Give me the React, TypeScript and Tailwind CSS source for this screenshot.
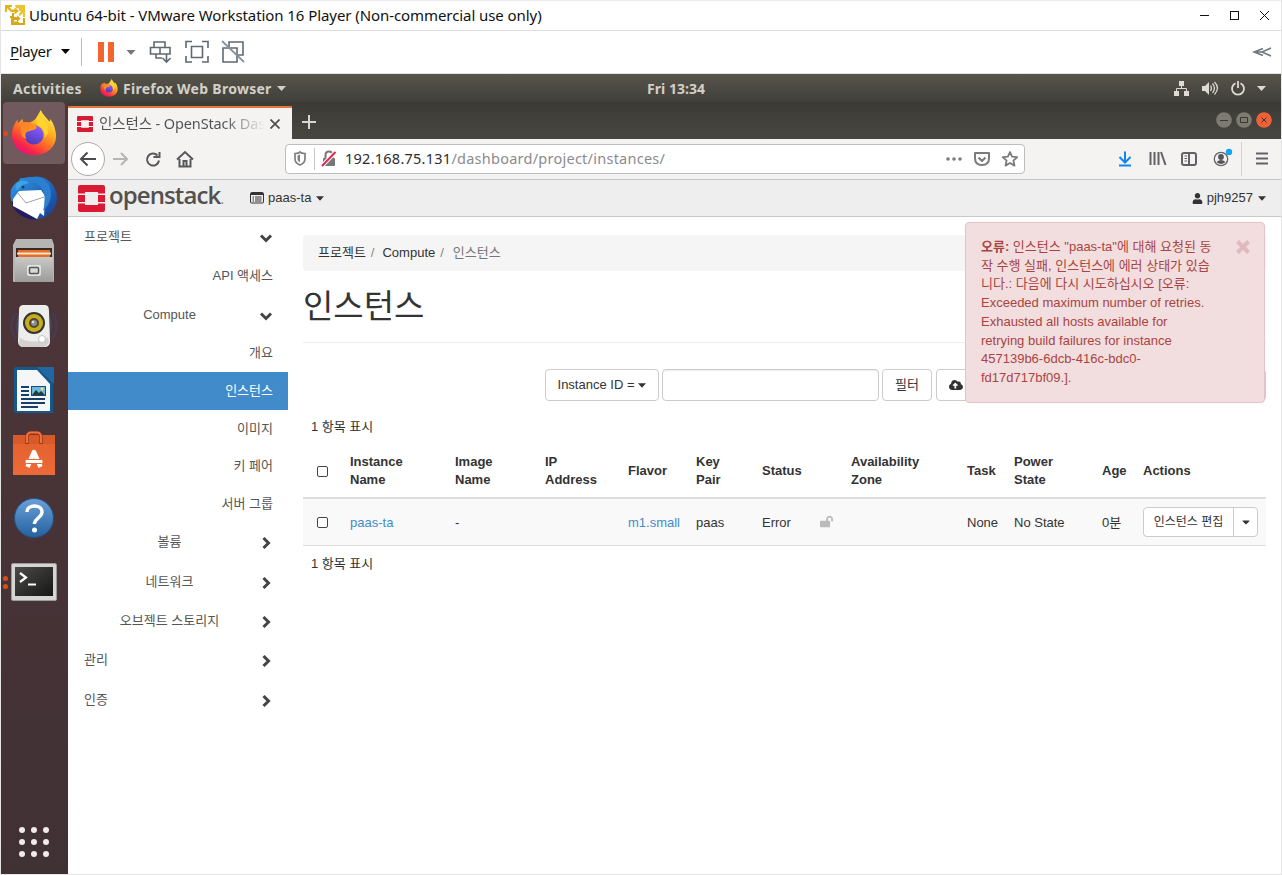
import React from "react";
import { FaCaretDown, FaCloudUploadAlt, FaLockOpen, FaTimes, FaUser } from "react-icons/fa";

const sans = "font-['Liberation_Sans','Noto_Sans_CJK_KR',sans-serif]";
const ubuntu = "font-['Noto_Sans','Noto_Sans_CJK_KR',sans-serif]";

function VmwareLogo() {
  return (
    <svg width="21" height="21" viewBox="0 0 21 21" className="shrink-0">
      <path d="M0 0h7v2H4.500l2 2.500h3V2.500L14 6l-4.500 3.500V7H6L2 3v4H0z" fill="#e2b21c" />
      <path d="M10 0h10v12h-2V8l-3 3-1.500-1.500L16 6h-2V3.500h-3z" fill="#ecc433" />
      <path d="M7 8h2v4h3v-2l3.500 3.500L12 17v-2H9v1.500h4L14.500 18H18v-5h2v7H6V13H5v-2h2z" fill="#d9a710" />
    </svg>
  );
}

function Firefox({ size, id }: { size: number; id: string }) {
  return (
    <svg width={size} height={size} viewBox="0 0 48 48" className="shrink-0">
      <defs>
        <linearGradient id={id + "a"} x1="0.85" y1="0.05" x2="0.25" y2="1">
          <stop offset="0" stopColor="#fff44f" />
          <stop offset="0.35" stopColor="#ffb01f" />
          <stop offset="0.62" stopColor="#ff6329" />
          <stop offset="0.85" stopColor="#f8204e" />
          <stop offset="1" stopColor="#e31587" />
        </linearGradient>
        <linearGradient id={id + "b"} x1="0.7" y1="0" x2="0.3" y2="1">
          <stop offset="0" stopColor="#9059ff" />
          <stop offset="1" stopColor="#4a3cb8" />
        </linearGradient>
        <linearGradient id={id + "c"} x1="0" y1="0" x2="1" y2="1">
          <stop offset="0" stopColor="#ff7a2a" />
          <stop offset="1" stopColor="#ffa51e" />
        </linearGradient>
      </defs>
      <path d="M31 0c2 5 6 8 9 12 1-1 1-2 1-3 4 6 6 12 6 18 0 12-10 20-23 20S1 38 1 26c0-7 3-12 6-16v4l5-5c0 2 1 4 2 5 3 0 8-1 11-4 2-3 4-6 6-10z" fill={"url(#" + id + "a)"} />
      <circle cx="24" cy="26" r="10" fill={"url(#" + id + "b)"} />
      <path d="M12 13c5-1 11 0 15 5 0 2-4 3-8 4-4 1-5 4-3 8-4-1-6-4-6-8s1-7 2-9z" fill={"url(#" + id + "c)"} />
      <path d="M28 16c5 2 8 7 7 13 5-4 5-11 2-15-3-4-6-6-5-12-5 4-7 9-4 14z" fill="#ffd52c" />
    </svg>
  );
}

function Thunderbird() {
  return (
    <svg width="48" height="48" viewBox="0 0 48 48">
      <defs>
        <linearGradient id="tb" x1="0" y1="0" x2="1" y2="1">
          <stop offset="0" stopColor="#2f9be8" />
          <stop offset="0.6" stopColor="#1f5fb4" />
          <stop offset="1" stopColor="#1b3a88" />
        </linearGradient>
      </defs>
      <path d="M10 5l8 1c8-5 19-2 25 6 6 9 5 20-1 27-7 8-21 10-30 4C3 37-1 27 1 17c1-3 3-6 6-8 2-1 3-2 3-4z" fill="url(#tb)" />
      <path d="M1 28c2 9 9 16 18 18l8 1-8-8z" fill="#241a5e" />
      <path d="M3 26L9 18l22-1 4 6-1 20-4-3-3 6L3 33z" fill="#fff" />
      <path d="M7 19l9 11 18-6" stroke="#9aa4b2" strokeWidth="1" fill="none" />
      <path d="M10 6c6 1 14 1 20 7 5 5 6 14 3 25 8-7 10-18 6-26C34 4 22 2 10 6z" fill="#2e7fd0" />
      <path d="M7 10c4-3 9-3 12 0-5 1-8 3-12 8-2-3-2-6 0-8z" fill="#3fa2e6" />
      <circle cx="13" cy="14" r="1.5" fill="#173a73" />
    </svg>
  );
}

function Files() {
  return (
    <svg width="44" height="46" viewBox="0 0 44 46">
      <defs>
        <linearGradient id="fl" x1="0" y1="0" x2="0" y2="1">
          <stop offset="0" stopColor="#c9c9c7" />
          <stop offset="1" stopColor="#9b9b99" />
        </linearGradient>
      </defs>
      <path d="M4 1h36l2 6v36a1 1 0 01-1 1H2a1 1 0 01-1-1V7z" fill="#b5b5b3" />
      <path d="M4 10h36v9H4z" fill="#3a2a22" />
      <path d="M6 12h32v7H6z" fill="#e2702c" />
      <path d="M5 14.500h34v2H5z" fill="#fbe3c4" />
      <path d="M3 19h38v25H3z" fill="url(#fl)" />
      <rect x="15" y="27" width="14" height="11" rx="2" fill="#e2e2e0" />
      <rect x="17.500" y="29.500" width="9" height="6" rx="1" fill="#d8d8d8" stroke="#555" strokeWidth="1.500" />
    </svg>
  );
}

function Rhythmbox() {
  return (
    <svg width="48" height="46" viewBox="0 0 48 46">
      <path d="M6 10c-6 8-6 18 0 26M42 10c6 8 6 18 0 26" stroke="#4a3a4e" strokeWidth="3" fill="none" />
      <path d="M10 12c-4 7-4 15 0 22M38 12c4 7 4 15 0 22" stroke="#444058" strokeWidth="3" fill="none" />
      <path d="M14 2h20c4 0 5 2 5 6l1 30c0 4-2 6-6 6H14c-4 0-6-2-6-6L9 8c0-4 1-6 5-6z" fill="#ededeb" />
      <path d="M10 34c4 6 24 6 28 0l1 5c-2 4-4 5-6 5H14c-3 0-5-2-5-5z" fill="#d2d2d2" />
      <circle cx="24" cy="20" r="11" fill="#33332f" />
      <circle cx="24" cy="20" r="9" fill="#c9ac1b" />
      <circle cx="24" cy="20" r="5" fill="#4c4a38" />
      <circle cx="24" cy="20" r="3" fill="#8d8f8a" />
      <circle cx="23" cy="19" r="1.200" fill="#e4e4e4" />
      <circle cx="32" cy="36" r="3.500" fill="#fff" stroke="#c4c4c4" />
    </svg>
  );
}

function Writer() {
  return (
    <svg width="42" height="48" viewBox="0 0 42 48">
      <path d="M3 1h24l13 13v33H3a2 2 0 01-2-2V3a2 2 0 012-2z" fill="#14588c" />
      <path d="M4 4h20l13 14v27H4z" fill="#f4f6f8" />
      <path d="M24 1h17v17z" fill="#2167a4" />
      <path d="M8 20h8v2H8zM8 24h8v2H8zM8 28h8v2H8zM8 32h24v2H8zM8 36h24v2H8zM8 40h17v2H8z" fill="#173f68" />
      <path d="M18 20h15v10H18z" fill="#174d7e" />
      <path d="M19 21h13v8H19z" fill="#6eb9df" />
      <path d="M19 29l4-5 3 3 2-2 4 4z" fill="#273c34" />
      <circle cx="29" cy="23" r="1.400" fill="#f8e86c" />
    </svg>
  );
}

function Software() {
  return (
    <svg width="44" height="46" viewBox="0 0 44 46">
      <defs>
        <linearGradient id="sw" x1="0" y1="0" x2="0" y2="1">
          <stop offset="0" stopColor="#e0602c" />
          <stop offset="1" stopColor="#ee6a38" />
        </linearGradient>
      </defs>
      <path d="M1 4h42v40H1z" fill="url(#sw)" />
      <path d="M1 4h42v9H1z" fill="#d85a2a" />
      <path d="M15 13V7q0-5 4-5h6q4 0 4 5v6" stroke="#9d3716" strokeWidth="3.500" fill="none" />
      <path d="M15 12V6q0-4.500 4-4.500h6q4 0 4 4.500v6" stroke="#ee7142" strokeWidth="2" fill="none" />
      <path d="M15.500 36l6.500-15 6.500 15" stroke="#fff" strokeWidth="4.500" fill="none" strokeLinejoin="round" />
      <rect x="13" y="28.500" width="18" height="4" rx="1.500" fill="#fff" stroke="#e9683a" />
    </svg>
  );
}

function Help() {
  return (
    <svg width="42" height="42" viewBox="0 0 42 42">
      <defs>
        <linearGradient id="hp" x1="0" y1="0" x2="0" y2="1">
          <stop offset="0" stopColor="#6aa0d8" />
          <stop offset="1" stopColor="#24619f" />
        </linearGradient>
      </defs>
      <circle cx="21" cy="21" r="19.500" fill="url(#hp)" stroke="#245182" strokeWidth="1" />
      <path d="M14 15c0-8 15-8 15 0 0 5-6 6-7.500 11v1" stroke="#fff" strokeWidth="3.400" fill="none" />
      <circle cx="21.500" cy="33" r="2.500" fill="#fff" />
    </svg>
  );
}

function Terminal() {
  return (
    <svg width="46" height="38" viewBox="0 0 46 38">
      <defs>
        <linearGradient id="tm" x1="0" y1="0" x2="1" y2="1">
          <stop offset="0" stopColor="#4b4b49" />
          <stop offset="1" stopColor="#161616" />
        </linearGradient>
      </defs>
      <rect x="0.500" y="0.500" width="45" height="37" rx="1.500" fill="#d5d5d3" stroke="#9c9c9a" />
      <rect x="4" y="4" width="38" height="29" fill="url(#tm)" />
      <path d="M9 10l6 4.500-6 4.500" stroke="#fff" strokeWidth="2.200" fill="none" />
      <path d="M17 21.500h8" stroke="#fff" strokeWidth="2" />
    </svg>
  );
}

function OpenStackMark({ size }: { size: number }) {
  return (
    <svg width={size} height={size} viewBox="0 0 27 27" className="shrink-0">
      <path d="M2 0h23a2 2 0 012 2v6.500h-7V7H7v1.500H0V2a2 2 0 012-2zM0 10h7v7H0zM20 10h7v7h-7zM0 18.500h7V20h13v-1.500h7V25a2 2 0 01-2 2H2a2 2 0 01-2-2z" fill="#da1a32" />
    </svg>
  );
}

function Caret({ className }: { className: string }) {
  return (
    <svg width="9" height="5" viewBox="0 0 9 5" className={"shrink-0 " + className}>
      <path d="M0 0h9L4.500 5z" fill="currentColor" />
    </svg>
  );
}

function Chevron({ open }: { open?: boolean }) {
  return (
    <svg width="14" height="14" viewBox="0 0 14 14" fill="none" stroke="#444" strokeWidth="3">
      <path d={open ? "M2 4.500l5 5 5-5" : "M4.500 2l5 5-5 5"} />
    </svg>
  );
}

function TitleBar() {
  return (
    <div className="flex h-[31px] items-center border-b border-t border-b-[#dedede] border-t-[#ececec] bg-white pl-[4px]">
      <VmwareLogo />
      <span className="ml-[3px] whitespace-nowrap font-['Noto_Sans','Noto_Sans_CJK_KR',sans-serif] text-[15px] tracking-[-0.075px] text-[#111]">
        Ubuntu 64-bit - VMware Workstation 16 Player (Non-commercial use only)
      </span>
      <svg width="70" height="12" viewBox="0 0 70 12" className="mb-px ml-auto mr-[11px]" fill="none" stroke="#111" shapeRendering="crispEdges">
        <path d="M0 6.500h9" />
        <path d="M30.500 2.500h8v8h-8z" />
        <path d="M60 2l9 9M69 2l-9 9" shapeRendering="auto" />
      </svg>
    </div>
  );
}

function PlayerBar() {
  return (
    <div className="flex h-[43px] items-center border-b border-[#e2e2e2] bg-white pb-px pl-[9px]">
      <span className="mb-[2px] w-[43px] whitespace-nowrap font-['Noto_Sans',sans-serif] text-[15px] leading-5 tracking-[-0.35px] text-[#111]">
        <span className="underline underline-offset-2">P</span>layer
      </span>
      <Caret className="ml-[8px] text-black" />
      <span className="ml-[11px] h-7 w-px bg-[#b9b9b9]" />
      <svg width="148" height="26" viewBox="0 0 148 26" className="ml-[15px]" fill="none">
        <path d="M1 3h6v20H1zM11 3h6v20h-6z" fill="#f0662e" />
        <path d="M29.500 11h9L34 16z" fill="#777" />
        <g stroke="#5f6a70" strokeWidth="1.600">
          <path d="M57 3h11v5.500H57zM53.500 8.500H63V15h-9.500zM63 8.500h10V15H63zM69.500 15v8M65.500 19l4 4 4-4M59 15v4h6" />
          <path d="M89 9V2.500h6M105 2.500h6V9M111 17v6h-6M95 23h-6v-6M94.500 7.500h11v11h-11z" />
          <path d="M132 8.500V3h14v13h-5.500M126 9h14v14h-14z" />
          <path d="M125 2l22 21" stroke="#87939c" strokeWidth="1.800" />
        </g>
      </svg>
      <svg width="20" height="10" viewBox="0 0 20 10" className="ml-auto mr-[9px]" fill="none" stroke="#6d7880" strokeWidth="1.600">
        <path d="M11 1.500L2 5l9 3.500M19 1l-9 4 9 4M2 5h9" />
      </svg>
    </div>
  );
}

function GnomeBar() {
  return (
    <div className={"grid h-[28px] grid-cols-[1fr_auto_1fr] items-center bg-linear-to-b from-[#57544b] to-[#403f3a] text-[14px] font-bold text-[#d3d0c8] " + ubuntu}>
      <div className="flex items-center pl-[12px]">
        <span className="w-[69px] whitespace-nowrap tracking-[0.38px]">Activities</span>
        <span className="ml-[18px]"><Firefox size={18} id="fs" /></span>
        <span className="ml-[5px] w-[150px] whitespace-nowrap tracking-[0.28px]">Firefox Web Browser</span>
        <Caret className="ml-[4px]" />
      </div>
      <span className="ml-[70px] text-[14px] tracking-[0.05px]">Fri 13:34</span>
      <div className="flex items-center justify-end pr-[15px]">
        <svg width="93" height="18" viewBox="0 0 93 18" fill="none">
          <path d="M6 2h5v5H6zM1 12h5v5H1zM11 12h5v5h-5z" fill="#dfdbd2" />
          <path d="M8.500 7v3M3.500 12v-2.500h10V12" stroke="#dfdbd2" />
          <path d="M29 7h3l4-4v13l-4-4h-3z" fill="#dfdbd2" />
          <path d="M37.500 6.500q2 2.500 0 5.500M39.500 4.500q4 4.500 0 9.500M41.500 3q6 6 0 12.500" stroke="#dfdbd2" strokeWidth="1.200" />
          <path d="M62.500 4.200a6 6 0 105 0M65 2v7" stroke="#dfdbd2" strokeWidth="1.800" />
          <path d="M84 7h9l-4.500 5z" fill="#dfdbd2" />
        </svg>
      </div>
    </div>
  );
}

const apps: { name: string; icon: React.ReactNode; dots: number }[] = [
  { name: "firefox", icon: <Firefox size={46} id="fb" />, dots: 1 },
  { name: "thunderbird", icon: <Thunderbird />, dots: 0 },
  { name: "files", icon: <Files />, dots: 0 },
  { name: "rhythmbox", icon: <Rhythmbox />, dots: 0 },
  { name: "writer", icon: <Writer />, dots: 0 },
  { name: "software", icon: <Software />, dots: 0 },
  { name: "help", icon: <Help />, dots: 0 },
  { name: "terminal", icon: <Terminal />, dots: 2 },
];

function Launcher() {
  return (
    <aside className="flex w-[67px] shrink-0 flex-col bg-linear-to-b from-[#503639] to-[#403135] pl-[2px]">
      {apps.map((a, i) => (
        <div key={a.name} className={"relative mb-[2.2px] flex h-[62px] w-[62px] items-center justify-center rounded-[4px] " + (i === 0 ? "bg-[#705a5d]" : "")}>
          {a.icon}
          <span className="absolute inset-y-0 left-0 flex flex-col justify-center gap-[3px]">
            {Array.from({ length: a.dots }, (_, d) => (
              <span key={d} className="size-[5px] rounded-full bg-[#dd4a1c]" />
            ))}
          </span>
        </div>
      ))}
      <div className="mb-[17px] ml-[16px] mt-auto grid w-[30px] grid-cols-3 gap-[6px]">
        {Array.from({ length: 9 }, (_, i) => (
          <span key={i} className="size-[6px] rounded-full bg-[#f1e9ea]" />
        ))}
      </div>
    </aside>
  );
}

function TabStrip() {
  return (
    <div className={"flex h-[37px] bg-linear-to-b from-[#3b3a35] to-[#484741] " + ubuntu}>
      <div className="mt-[4px] flex w-[224px] items-center border-t-2 border-[#e5743f] bg-[#f4f3f2] pl-[9px]">
        <OpenStackMark size={16} />
        <span className="ml-[6px] w-[166px] overflow-hidden whitespace-nowrap bg-linear-to-r from-[#4e5054] from-75% to-transparent bg-clip-text text-[14.5px] tracking-[-0.12px] text-transparent">
          인스턴스 - OpenStack Dashboard
        </span>
        <svg width="10" height="10" viewBox="0 0 10 10" className="ml-[5px]">
          <path d="M0.500 0.500l9 9M9.500 0.500l-9 9" stroke="#4c4c4c" strokeWidth="1.700" />
        </svg>
      </div>
      <svg width="14" height="14" viewBox="0 0 14 14" className="ml-[10px] mt-[13px]">
        <path d="M7 0v14M0 7h14" stroke="#d8d6d0" strokeWidth="2" />
      </svg>
      <div className="ml-auto mr-[9px] mt-[10px]">
        <svg width="56" height="16" viewBox="0 0 56 16" fill="none">
          <circle cx="8" cy="8" r="7.800" fill="#7d7a71" />
          <circle cx="28" cy="8" r="7.800" fill="#7d7a71" />
          <circle cx="48" cy="8" r="7.800" fill="#ee6038" />
          <path d="M4 8.500h8M24.500 5.500h7v5h-7zM45.500 5.500l5 5M50.500 5.500l-5 5" stroke="#40352f" />
        </svg>
      </div>
    </div>
  );
}

function NavBar() {
  return (
    <div className="flex h-[41px] items-center border-b border-[#c4c4c4] bg-[#f4f3f2] pl-[3px]">
      <span className="flex size-[34px] items-center justify-center rounded-full border border-[#aaa] bg-white">
        <svg width="18" height="18" viewBox="0 0 18 18" fill="none" stroke="#4a4a4f" strokeWidth="2">
          <path d="M2 9h15M8.500 2.500L2 9l6.500 6.500" />
        </svg>
      </span>
      <svg width="86" height="20" viewBox="0 0 86 20" className="ml-[7px]" fill="none" stroke="#58585a" strokeWidth="2">
        <path d="M1 10h14M9 4l6 6-6 6" stroke="#b5b5b5" />
        <path d="M45.500 6.500a6 6 0 101.500 5M47.500 3v5h-6" />
        <path d="M65 10.500L73 3l8 7.500M67.500 10v7.500h11V10M71.500 17v-5h3v5" />
      </svg>
      <div className="ml-[87px] flex h-[30px] w-[740px] items-center rounded-[4px] border border-[#bdbdbd] bg-white pl-[8px]">
        <svg width="44" height="24" viewBox="0 0 44 24" fill="none">
          <path d="M1 6.500q4 0 5-1.500 1 1.500 5 1.500v5.500q0 4-5 6-5-2-5-6z" stroke="#808084" strokeWidth="1.700" />
          <path d="M6 7.500v8q-2.500-1.300-2.500-3.500V8.500z" fill="#808084" />
          <path d="M20.500 1v22" stroke="#c6c6c6" />
          <rect x="29" y="11" width="12" height="8" rx="1" fill="#77777a" />
          <path d="M31.500 11V8q0-3.500 3.500-3.500T38.500 8v3" stroke="#77777a" strokeWidth="2" />
          <path d="M28.500 18.500l13-13.500" stroke="#fff" strokeWidth="4" />
          <path d="M28 19L41.500 5" stroke="#e22850" strokeWidth="2" />
        </svg>
        <span className={"ml-[7px] whitespace-nowrap text-[14.500px] tracking-[0.25px] text-[#8b8b8d] " + ubuntu}>
          <span className="text-[#2c2c30]">192.168.75.131</span>/dashboard/project/instances/
        </span>
        <svg width="74" height="18" viewBox="0 0 74 18" className="ml-auto mr-[5px]" fill="none" stroke="#7b7b7e" strokeWidth="2">
          <path d="M3 9h.01M9 9h.01M15 9h.01" strokeWidth="3.600" strokeLinecap="round" />
          <path d="M30 3h14v5q0 7-7 7t-7-7zM33.500 7.500l3.500 3.500 3.500-3.500" strokeLinejoin="round" />
          <path d="M65 2l2.100 4.700 5.100.5-3.800 3.400 1.100 5L65 13l-4.500 2.600 1.100-5-3.800-3.400 5.100-.5z" strokeWidth="1.800" strokeLinejoin="round" />
        </svg>
      </div>
      <svg width="156" height="34" viewBox="0 0 156 34" className="ml-auto mr-[8px]" fill="none" stroke="#626266" strokeWidth="2">
        <path d="M8 9.500v11M2.500 15L8 20.500 13.500 15M2 23.500h12" stroke="#1283f2" />
        <path d="M33.500 10v13M37.500 10v13M41.500 10v13M44 10l4.500 13" />
        <rect x="65" y="11" width="14" height="12" rx="2" />
        <path d="M72 11v12" />
        <path d="M67.500 14h2.500M67.500 16.500h2.500M67.500 19h2.500" strokeWidth="1" />
        <circle cx="104" cy="17" r="6.700" strokeWidth="1.300" />
        <circle cx="104" cy="15" r="2.900" fill="#555558" stroke="none" />
        <path d="M99.500 20q4.500-4 9 0-4.500 4-9 0z" fill="#555558" stroke="none" />
        <circle cx="112" cy="10" r="3.200" fill="#10a5f5" stroke="none" />
        <path d="M124.500 0v34" stroke="#d2d2d2" strokeWidth="1" />
        <path d="M139 11.500h12M139 16.500h12M139 21.500h12" />
      </svg>
    </div>
  );
}

function OpenStackHeader() {
  return (
    <header className="flex h-[37px] items-center border-b border-[#c9c9c9] bg-[#eeeeee] pl-[10px] text-[13px] text-[#333]">
      <OpenStackMark size={27} />
      <span className="ml-[4px] w-[118px] whitespace-nowrap font-['Open_Sans',sans-serif] text-[24px] font-semibold leading-6 tracking-[-0.9px] text-[#54504d]">
        <span className="block pb-[3px]">openstack<span className="text-[14px] text-[#999]">.</span></span>
      </span>
      <svg width="14" height="12" viewBox="0 0 14 12" className="ml-[23px]">
        <path d="M1.500 0.500h11a1 1 0 011 1v8.500a1 1 0 01-1 1h-11a1 1 0 01-1-1V1.500a1 1 0 011-1z" fill="none" stroke="#333" />
        <path d="M1 1h12v2H1zM2.500 4.500H4v1H2.500zM2.500 6.500H4v1H2.500zM2.500 8.500H4v1H2.500zM5 4.500h6.500v1H5zM5 6.500h6.500v1H5zM5 8.500h6.500v1H5z" fill="#333" />
      </svg>
      <span className="ml-[4px]">paas-ta</span>
      <Caret className="ml-[5px] w-[8px]" />
      <FaUser className="ml-auto" size={11} />
      <span className="ml-[4px]">pjh9257</span>
      <Caret className="ml-[5px] mr-[15px] w-[8px]" />
    </header>
  );
}

const nav: { text: string; kind: "root" | "group" | "leaf" | "active"; h: string; open?: boolean }[] = [
  { text: "프로젝트", kind: "root", h: "h-[39px]", open: true },
  { text: "API 액세스", kind: "leaf", h: "h-[39px]" },
  { text: "Compute", kind: "group", h: "h-[39px]", open: true },
  { text: "개요", kind: "leaf", h: "h-[38px]" },
  { text: "인스턴스", kind: "active", h: "h-[38px]" },
  { text: "이미지", kind: "leaf", h: "h-[37px]" },
  { text: "키 페어", kind: "leaf", h: "h-[38px]" },
  { text: "서버 그룹", kind: "leaf", h: "h-[37px]" },
  { text: "볼륨", kind: "group", h: "h-[40px]" },
  { text: "네트워크", kind: "group", h: "h-[39px]" },
  { text: "오브젝트 스토리지", kind: "group", h: "h-[39px]" },
  { text: "관리", kind: "root", h: "h-[40px]" },
  { text: "인증", kind: "root", h: "h-[40px]" },
];

function Sidebar() {
  return (
    <nav className="w-[220px] shrink-0 text-[13px] text-[#555]">
      {nav.map((n) => (
        <div
          key={n.text}
          className={
            "flex items-center pl-[16px] pr-[15px] " + n.h +
            (n.kind === "active" ? " bg-[#428bca] text-white" : "") +
            (n.kind === "leaf" || n.kind === "active" ? " justify-end" : "")
          }
        >
          <span className={n.kind === "group" ? "flex-1 text-center" : n.kind === "root" ? "flex-1" : ""}>{n.text}</span>
          {n.kind === "root" || n.kind === "group" ? (
            <span className="flex w-[18px] justify-end pt-[2px]">
              <Chevron open={n.open} />
            </span>
          ) : null}
        </div>
      ))}
    </nav>
  );
}

const btn = "flex items-center rounded-[4px] border border-[#ccc] bg-white text-[#333]";

function Checkbox() {
  return <span className="ml-[6px] mt-[2px] block size-[11px] rounded-[2px] border border-[#444] bg-white" />;
}

const th = "px-2 text-left align-middle font-bold";
const td = "px-2 pt-[2px] align-middle";

function InstanceTable() {
  return (
    <table className="w-[963px] table-fixed border-collapse text-[13px] leading-[18px] text-[#333]">
      <colgroup>
        <col className="w-[39px]" />
        <col className="w-[105px]" />
        <col className="w-[90px]" />
        <col className="w-[83px]" />
        <col className="w-[68px]" />
        <col className="w-[66px]" />
        <col className="w-[58px]" />
        <col className="w-[31px]" />
        <col className="w-[116px]" />
        <col className="w-[47px]" />
        <col className="w-[88px]" />
        <col className="w-[41px]" />
        <col className="w-[131px]" />
      </colgroup>
      <thead>
        <tr className="h-[54px] border-b-2 border-[#ddd]">
          <th className={th}><Checkbox /></th>
          <th className={th}>Instance<br />Name</th>
          <th className={th}>Image<br />Name</th>
          <th className={th}>IP<br />Address</th>
          <th className={th}>Flavor</th>
          <th className={th}>Key<br />Pair</th>
          <th className={th}>Status</th>
          <th className={th} />
          <th className={th}>Availability<br />Zone</th>
          <th className={th}>Task</th>
          <th className={th}>Power<br />State</th>
          <th className={th}>Age</th>
          <th className={th}>Actions</th>
        </tr>
      </thead>
      <tbody>
        <tr className="h-[47px] border-b border-[#ddd] bg-[#f9f9f9]">
          <td className="px-2 align-middle"><Checkbox /></td>
          <td className={td + " text-[#428bca]"}>paas-ta</td>
          <td className={td}>-</td>
          <td className={td} />
          <td className={td + " whitespace-nowrap text-[#428bca]"}>m1.small</td>
          <td className={td}>paas</td>
          <td className={td}>Error</td>
          <td className="px-2 align-middle"><FaLockOpen size={13} className="text-[#bbb]" /></td>
          <td className={td} />
          <td className={td + " whitespace-nowrap"}>None</td>
          <td className={td}>No State</td>
          <td className={td + " whitespace-nowrap"}>0분</td>
          <td className="px-2 align-middle">
            <div className={btn + " h-[30px] w-[115px] text-[12px]"}>
              <span className="flex-1 whitespace-nowrap text-center">인스턴스 편집</span>
              <span className="flex h-full w-[24px] items-center justify-center border-l border-[#ccc]">
                <FaCaretDown size={12} />
              </span>
            </div>
          </td>
        </tr>
      </tbody>
    </table>
  );
}

function ErrorToast() {
  return (
    <div className="absolute right-[16px] top-[5px] flex h-[181px] w-[300px] rounded-[4px] border border-[#e3c3c8] bg-[#f2dede] pl-[15px] pt-[15px] text-[13px] leading-[18.7px] text-[#a94442]">
      <p className="w-[240px] whitespace-nowrap">
        <b>오류:</b> 인스턴스 "paas-ta"에 대해 요청된 동<br />
        작 수행 실패, 인스턴스에 에러 상태가 있습<br />
        니다.: 다음에 다시 시도하십시오 [오류:<br />
        Exceeded maximum number of retries.<br />
        Exhausted all hosts available for<br />
        retrying build failures for instance<br />
        457139b6-6dcb-416c-bdc0-<br />
        fd17d717bf09.].
      </p>
      <svg width="14" height="14" viewBox="0 0 14 14" className="ml-[15px] mt-[2px]">
        <path d="M1.500 1.500l11 11M12.500 1.500l-11 11" stroke="#dfb9bc" strokeWidth="4" />
      </svg>
    </div>
  );
}

function Main() {
  return (
    <main className="flex-1 pl-[15px] pt-[18px]">
      <div className="flex h-[36px] w-[963px] items-center rounded-[4px] bg-[#f5f5f5] pl-[15px] text-[13px] text-[#333]">
        <span>프로젝트</span>
        <span className="ml-[5px] text-[#888]">/</span>
        <span className="ml-[8px]">Compute</span>
        <span className="ml-[5px] text-[#888]">/</span>
        <span className="ml-[9px] text-[#777]">인스턴스</span>
      </div>
      <h1 className="flex h-[72px] w-[963px] items-start border-b border-[#eee] pt-[16px] text-[33px] leading-[40px] text-[#333]">인스턴스</h1>
      <div className="mt-[26px] flex w-[963px] text-[13px]">
        <div className={btn + " ml-[242px] h-[32px] w-[114px] justify-center"}>
          Instance ID =<Caret className="ml-[4px] w-[8px]" />
        </div>
        <div className={btn + " ml-[3px] h-[32px] w-[217px] shadow-[inset_0_1px_1px_rgba(0,0,0,0.075)]"} />
        <div className={btn + " ml-[3px] h-[32px] w-[50px] justify-center"}>필터</div>
        <div className={btn + " ml-[4px] h-[32px] flex-1 pl-[12px]"}>
          <FaCloudUploadAlt size={14} />
        </div>
      </div>
      <p className="mt-[16px] pl-[8px] text-[13px] leading-[20px] text-[#333]">1 항목 표시</p>
      <div className="mt-[7px]"><InstanceTable /></div>
      <p className="mt-[8px] pl-[8px] text-[13px] leading-[20px] text-[#333]">1 항목 표시</p>
    </main>
  );
}

export default function App() {
  return (
    <div className={"flex h-[875px] w-[1282px] flex-col overflow-hidden border-x border-b border-[#e4e4e4] bg-white " + sans}>
      <TitleBar />
      <PlayerBar />
      <GnomeBar />
      <div className="flex min-h-0 flex-1">
        <Launcher />
        <div className="flex min-w-0 flex-1 flex-col">
          <TabStrip />
          <NavBar />
          <OpenStackHeader />
          <div className="relative flex flex-1">
            <Sidebar />
            <Main />
            <ErrorToast />
          </div>
        </div>
      </div>
    </div>
  );
}
